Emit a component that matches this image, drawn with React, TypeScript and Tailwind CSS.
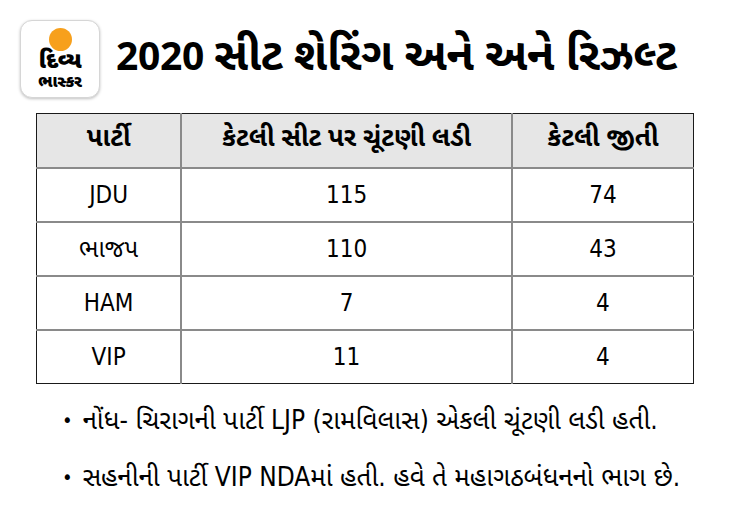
import React from "react";

const rows = [
  ["JDU", "115", "74"],
  ["ભાજપ", "110", "43"],
  ["HAM", "7", "4"],
  ["VIP", "11", "4"],
];

export default function App() {
  const font = { fontFamily: '"DejaVu Sans Condensed", "Noto Sans Gujarati", "Noto Sans", "Liberation Sans", sans-serif' };
  const guj = { fontFamily: '"Noto Sans Gujarati", "Noto Sans", "Liberation Sans", sans-serif' };
  return (
    <div className="w-[730px] h-[524px] bg-white text-black overflow-hidden" style={guj}>
      <div className="flex items-center pl-[20px] pt-[20px] gap-[16px]">
        <div className="w-[80px] h-[78px] rounded-[12px] bg-white border border-[#d6d6d6] shadow-[0_1px_3px_rgba(0,0,0,0.25)] flex flex-col items-center pt-[7px]">
          <div className="w-[23px] h-[23px] rounded-full bg-[#f7a01c]" />
          <div className="text-[23px] leading-[22px] font-black tracking-[-0.5px]">દિવ્ય</div>
          <div className="text-[16px] leading-[14px] font-black tracking-[-0.5px] mt-[4px]">ભાસ્કર</div>
        </div>
        <div className="font-bold leading-none whitespace-nowrap tracking-[-0.3px]">
          <span className="text-[39px]">2020 </span>
          <span className="text-[45px]">સીટ શેરિંગ અને અને રિઝલ્ટ</span>
        </div>
      </div>
      <div className="ml-[36px] mt-[15px] w-[658px]">
        <table className="w-full border-collapse border-[1.5px] border-[#1a1a1a] text-[24px]">
          <colgroup>
            <col className="w-[145px]" />
            <col className="w-[331px]" />
            <col className="w-[182px]" />
          </colgroup>
          <thead>
            <tr className="h-[54px] bg-[#e6e6e6] text-[26px]">
              <th className="border-2 border-[#8a8a8a] border-t-0 border-l-0 font-bold">પાર્ટી</th>
              <th className="border-2 border-[#8a8a8a] border-t-0 font-bold">કેટલી સીટ પર ચૂંટણી લડી</th>
              <th className="border-2 border-[#8a8a8a] border-t-0 border-r-0 font-bold">કેટલી જીતી</th>
            </tr>
          </thead>
          <tbody style={font}>
            {rows.map((r, i) => (
              <tr key={i} className="h-[54px]">
                <td className={`border-2 border-[#8a8a8a] border-l-0 text-center ${i === rows.length - 1 ? "border-b-0" : ""}`}>{r[0]}</td>
                <td className={`border-2 border-[#8a8a8a] text-center ${i === rows.length - 1 ? "border-b-0" : ""}`}>{r[1]}</td>
                <td className={`border-2 border-[#8a8a8a] border-r-0 text-center ${i === rows.length - 1 ? "border-b-0" : ""}`}>{r[2]}</td>
              </tr>
            ))}
          </tbody>
        </table>
      </div>
      <ul className="mt-[8px] pl-[62px] text-[26px] leading-[57px]" style={font}>
        <li className="flex items-center gap-[10px]"><span className="text-[20px]">•</span><span className="whitespace-nowrap">નોંધ- ચિરાગની પાર્ટી LJP (રામવિલાસ) એકલી ચૂંટણી લડી હતી.</span></li>
        <li className="flex items-center gap-[10px]"><span className="text-[20px]">•</span><span className="whitespace-nowrap">સહનીની પાર્ટી VIP NDAમાં હતી. હવે તે મહાગઠબંધનનો ભાગ છે.</span></li>
      </ul>
    </div>
  );
}
